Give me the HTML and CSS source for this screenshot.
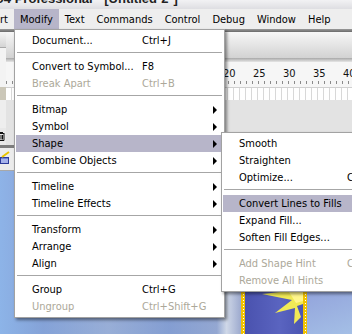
FILE: index.html
```html
<!DOCTYPE html>
<html lang="en">
<head>
    <meta charset="UTF-8">
    <title>Modify menu</title>
    <link rel="stylesheet" href="styles.css">
</head>
<body>
    <div class="app">
        <div class="titlebar">
            <span class="title-text">Macromedia Flash MX 2004 Professional - [Untitled-2*]</span>
        </div>
        <div class="menubar">
            <div class="menubar-clip">
                <span class="mb-item">File</span>
                <span class="mb-item">Edit</span>
                <span class="mb-item">View</span>
                <span class="mb-item">Insert</span>
            </div>
            <span class="mb-item active">Modify</span>
            <span class="mb-item">Text</span>
            <span class="mb-item">Commands</span>
            <span class="mb-item">Control</span>
            <span class="mb-item">Debug</span>
            <span class="mb-item">Window</span>
            <span class="mb-item">Help</span>
        </div>
        <div class="dock-line"></div>
        <div class="timeline">
            <div class="layers">
                <div class="layers-head"></div>
                <div class="layers-blank"></div>
                <div class="layer-row"></div>
                <div class="layers-fill"></div>
                <div class="layers-tools">
                    <!-- delete layer -->
                    <svg width="8" height="11" viewBox="0 0 8 11">
                        <path d="M0.5 2.5h6M2 1.5h3M1.5 3v6.5h4.5V3M3 4v4.5M4.5 4v4.5" fill="none" stroke="#111" stroke-width="1"/>
                    </svg>
                </div>
            </div>
            <div class="frames">
                <div class="frames-head"></div>
                <div class="frames-line"></div>
                <div class="ruler">
                    <span>20</span><span>25</span><span>30</span><span>35</span><span>40</span>
                </div>
                <div class="ticks"></div>
                <div class="frame-row"></div>
                <div class="frames-fill"></div>
            </div>
        </div>
        <div class="edit-line"></div>
        <div class="edit-bar">
            <!-- edit scene -->
            <svg width="10" height="16" viewBox="0 0 10 16">
                <rect x="0.5" y="6.5" width="8" height="6" fill="#6d7fd8" stroke="#2b3a9a"/>
                <path d="M1 9h7M1 11h7" stroke="#dfe6ff" stroke-width="1"/>
                <path d="M2 6L9 1" stroke="#e8c400" stroke-width="2"/>
            </svg>
        </div>
        <div class="stage">
            <div class="stage-left"></div>
            <div class="film">
                <div class="sprocket"></div>
                <div class="film-frame">
                    <svg width="58" height="43" viewBox="0 0 58 43">
                        <polygon points="17,3 44,0 58,0 58,13 52,15 56,26 49,33 50,17 30,22 47,9" fill="#f1ea55"/>
                        <polygon points="44,1 58,0 58,10 51,12" fill="#fff68c"/>
                    </svg>
                </div>
                <div class="sprocket"></div>
            </div>
            <div class="stage-right"></div>
        </div>

        <div class="menu main-menu">
            <div class="item"><span class="label">Document...</span><span class="key">Ctrl+J</span></div>
            <div class="sep"></div>
            <div class="item"><span class="label">Convert to Symbol...</span><span class="key">F8</span></div>
            <div class="item disabled"><span class="label">Break Apart</span><span class="key">Ctrl+B</span></div>
            <div class="sep"></div>
            <div class="item"><span class="label">Bitmap</span><span class="arrow"></span></div>
            <div class="item"><span class="label">Symbol</span><span class="arrow"></span></div>
            <div class="item selected"><span class="label">Shape</span><span class="arrow"></span></div>
            <div class="item"><span class="label">Combine Objects</span><span class="arrow"></span></div>
            <div class="sep"></div>
            <div class="item"><span class="label">Timeline</span><span class="arrow"></span></div>
            <div class="item"><span class="label">Timeline Effects</span><span class="arrow"></span></div>
            <div class="sep"></div>
            <div class="item"><span class="label">Transform</span><span class="arrow"></span></div>
            <div class="item"><span class="label">Arrange</span><span class="arrow"></span></div>
            <div class="item"><span class="label">Align</span><span class="arrow"></span></div>
            <div class="sep"></div>
            <div class="item"><span class="label">Group</span><span class="key">Ctrl+G</span></div>
            <div class="item disabled"><span class="label">Ungroup</span><span class="key">Ctrl+Shift+G</span></div>
        </div>

        <div class="menu sub-menu">
            <div class="item"><span class="label">Smooth</span></div>
            <div class="item"><span class="label">Straighten</span></div>
            <div class="item"><span class="label">Optimize...</span><span class="key">Ctrl+Alt+Shift+C</span></div>
            <div class="sep"></div>
            <div class="item selected"><span class="label">Convert Lines to Fills</span></div>
            <div class="item"><span class="label">Expand Fill...</span></div>
            <div class="item"><span class="label">Soften Fill Edges...</span></div>
            <div class="sep"></div>
            <div class="item disabled"><span class="label">Add Shape Hint</span><span class="key">Ctrl+Shift+H</span></div>
            <div class="item disabled"><span class="label">Remove All Hints</span></div>
        </div>
    </div>
</body>
</html>
```

FILE: styles.css
```css
*{
    margin: 0;
    padding: 0;
    box-sizing: border-box;
}
body{
    width: 352px;
    height: 334px;
    overflow: hidden;
    font-family: "DejaVu Sans Condensed", "Liberation Sans", sans-serif;
    font-size: 11px;
    color: #000;
}
.app{
    position: relative;
    width: 352px;
    height: 334px;
    overflow: hidden;
    display: flex;
    flex-direction: column;
}

/* title + menu bar */
.titlebar{
    height: 9px;
    overflow: hidden;
    display: flex;
    background: linear-gradient(#f2f2f4, #dedee2);
}
.title-text{
    display: block;
    flex: none;
    margin-top: -9px;
    margin-left: -158px;
    line-height: 16px;
    font-family: "Liberation Sans", sans-serif;
    font-weight: bold;
    font-size: 13px;
    color: #222;
    white-space: nowrap;
}
.menubar{
    height: 20px;
    display: flex;
    align-items: stretch;
    background: #eeeeee;
    white-space: nowrap;
}
.menubar-clip{
    width: 14px;
    display: flex;
    justify-content: flex-end;
    overflow: hidden;
    flex: none;
}
.mb-item{
    display: flex;
    align-items: center;
    padding: 0 6px;
    flex: none;
}
.mb-item.active{
    background: #b7b5c9;
}

/* timeline */
.dock-line{
    height: 3px;
    background: linear-gradient(#9a9a9a, #6a6a6a);
}
.timeline{
    height: 113px;
    display: flex;
}
.layers{
    width: 14px;
    display: flex;
    flex-direction: column;
}
.layers-head{
    height: 16px;
    background: linear-gradient(#f6f6f6, #d4d4d4);
    border-bottom: 1px solid #a9a9a9;
}
.layers-blank{
    height: 39px;
    background: #f3f3f3;
}
.layer-row{
    height: 13px;
    background: #cbc7b8;
}
.layers-fill{
    height: 28px;
    background: #eeeeee;
}
.layers-tools{
    height: 17px;
    background: #e8e8e8;
    display: flex;
    align-items: center;
    overflow: hidden;
}
.layers-tools svg{
    margin-left: -2px;
}
.frames{
    flex: 1;
    display: flex;
    flex-direction: column;
}
.frames-head{
    height: 26px;
    background: linear-gradient(#f7f7f7, #d2d2d2);
}
.frames-line{
    height: 4px;
    background: linear-gradient(#a8a8a8, #e6e6e6);
}
.ruler{
    height: 19px;
    display: flex;
    padding-left: 217px;
    padding-top: 5px;
    line-height: 13px;
    background: #f6f6f6;
    white-space: nowrap;
    overflow: hidden;
    color: #111;
}
.ruler span{
    width: 30px;
    flex: none;
}
.ticks{
    height: 6px;
    background: #f6f6f6 repeating-linear-gradient(to right, #8a8a8a 0 1px, transparent 1px 6px) 0 0 / 100% 3px no-repeat;
}
.frame-row{
    height: 13px;
    background: repeating-linear-gradient(to right, #fff 0 5px, #d8d8d8 5px 6px);
    border-top: 1px solid #d0d0d0;
}
.frames-fill{
    flex: 1;
    background: #e3e3e3;
}
.edit-line{
    height: 3px;
    background: #7d7d7d;
}
.edit-bar{
    height: 23px;
    background: #ececec;
    border-bottom: 1px solid #a8a8a8;
    display: flex;
    align-items: center;
}

/* stage */
.stage{
    flex: 1;
    display: flex;
}
.stage-left{
    flex: 1;
    background:
        linear-gradient(to right, rgba(140,180,232,0.9) 0, rgba(125,152,206,0.6) 18%, rgba(160,170,200,0.5) 45%, rgba(120,138,190,0.5) 70%, rgba(150,160,196,0.6) 90%, rgba(214,220,232,0.9) 94%, rgba(160,168,200,0.8) 100%),
        linear-gradient(#9eaae0, #8fb2e6);
}
.film{
    width: 66px;
    display: flex;
}
.sprocket{
    width: 4px;
    background: #f2c300;
    display: flex;
    justify-content: center;
}
.sprocket::before{
    content: '';
    width: 1px;
    background: repeating-linear-gradient(#fff 0 1px, transparent 1px 3px);
}
.film-frame{
    flex: 1;
    display: flex;
    align-items: flex-end;
    background: linear-gradient(to right, #4a52ae, #5a64c0 60%, #4b55b2);
}
.film-frame svg{
    display: block;
}
.stage-right{
    width: 45px;
    background: linear-gradient(160deg, #7f88cc 0, #8a96d6 50%, #a4bfe6 100%);
}

/* menus */
.menu{
    position: absolute;
    background: #fff;
    border: 1px solid #a2a2a2;
    padding: 2px 0;
    box-shadow: 2px 2px 3px rgba(0, 0, 0, 0.45);
    white-space: nowrap;
}
.main-menu{
    left: 14px;
    top: 29px;
    width: 211px;
    z-index: 2;
}
.sub-menu{
    left: 221px;
    top: 132px;
    width: 220px;
    z-index: 3;
}
.item{
    height: 17px;
    display: flex;
    align-items: center;
    margin: 0 3px 0 1px;
    padding: 0 4px 0 16px;
}
.item .label{
    width: 110px;
    flex: none;
}
.sub-menu .item .label{
    width: 108px;
}
.item .key{
    flex: none;
}
.item .arrow{
    margin-left: auto;
    width: 0;
    height: 0;
    border-left: 4px solid #000;
    border-top: 4px solid transparent;
    border-bottom: 4px solid transparent;
}
.item.selected{
    background: #b7b5c9;
}
.item.disabled{
    color: #aca899;
}
.sep{
    height: 1px;
    margin: 3px 2px 5px 2px;
    background: #a6a6a6;
}
```
